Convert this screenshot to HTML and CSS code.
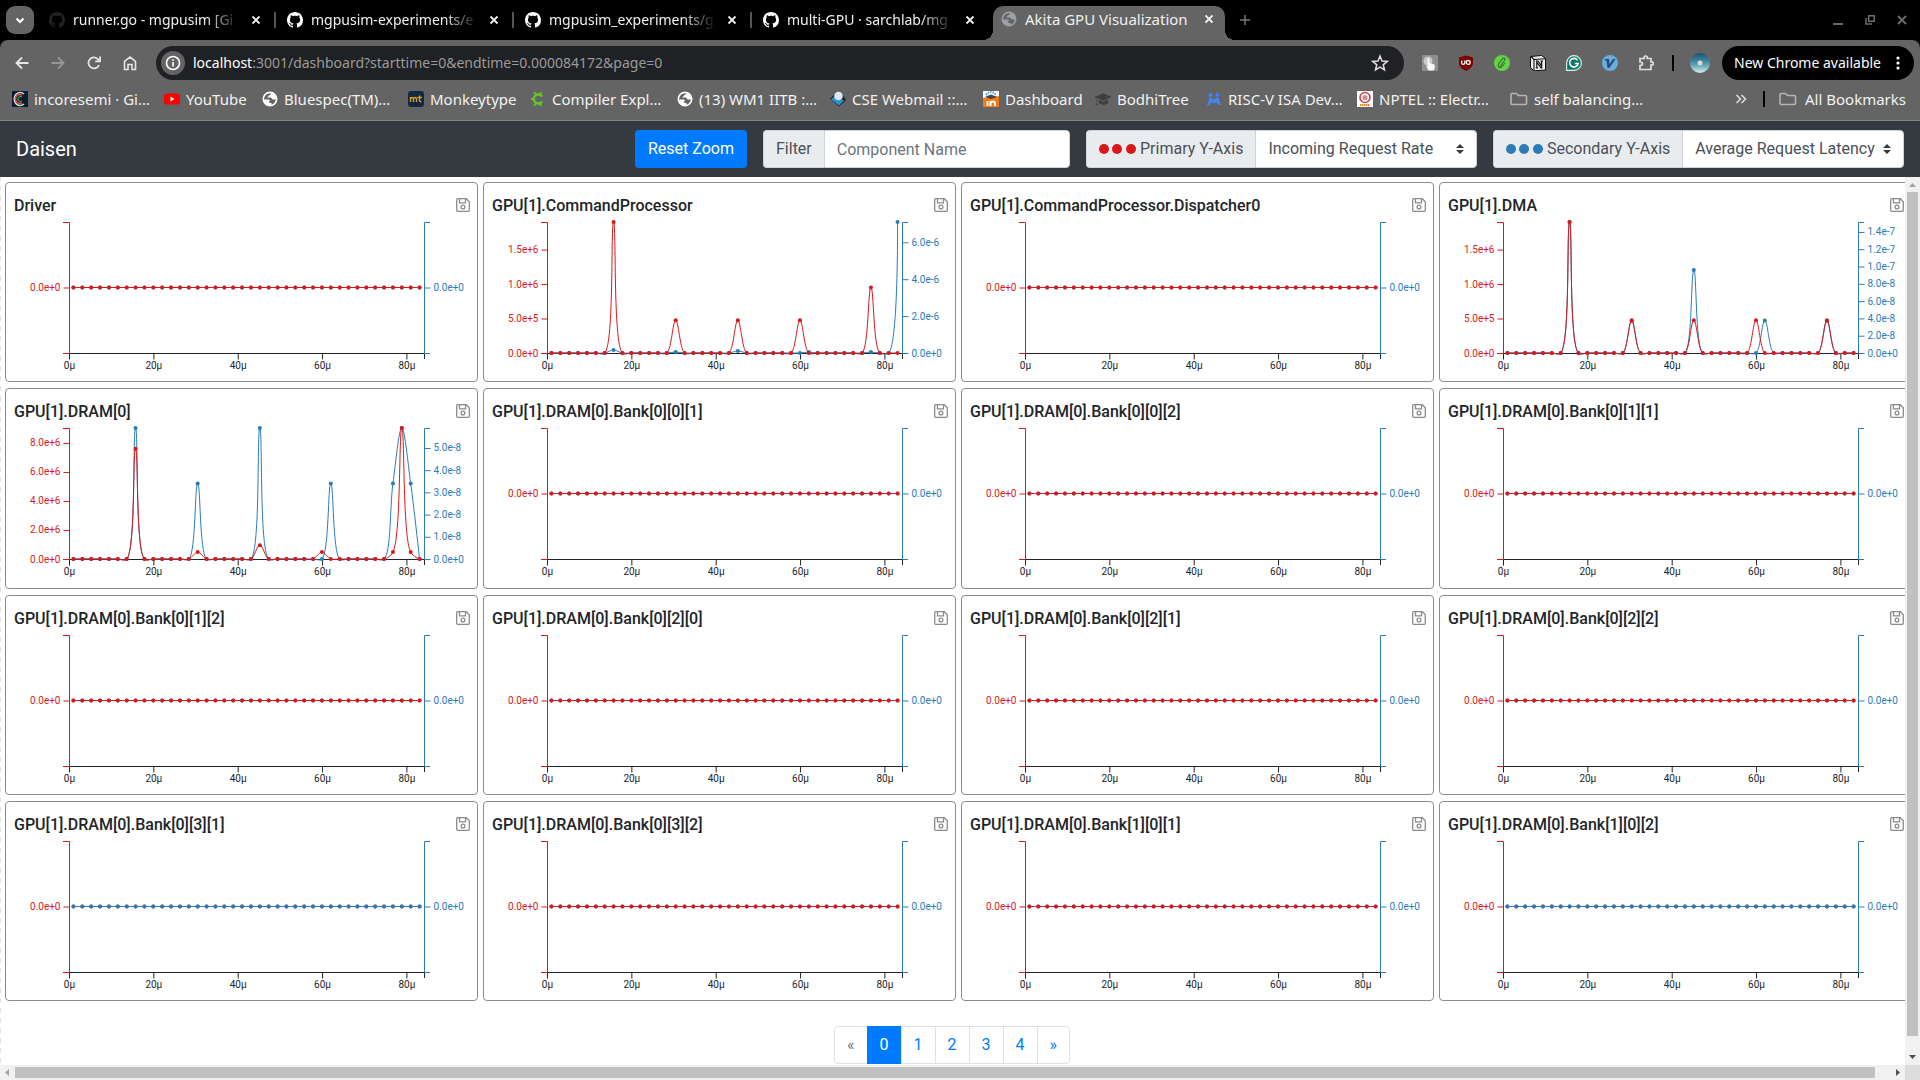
FILE: index.html
```html
<!DOCTYPE html>
<html lang="en">
<head>
<meta charset="utf-8">
<title>Akita GPU Visualization</title>
<link rel="stylesheet" href="styles.css">
</head>
<body>
<svg class="defs" aria-hidden="true">
  <symbol id="github" viewBox="0 0 16 16"><path d="M8 0C3.58 0 0 3.58 0 8c0 3.54 2.29 6.53 5.47 7.59.4.07.55-.17.55-.38 0-.19-.01-.82-.01-1.49-2.01.37-2.53-.49-2.69-.94-.09-.23-.48-.94-.82-1.13-.28-.15-.68-.52-.01-.53.63-.01 1.08.58 1.23.82.72 1.21 1.87.87 2.33.66.07-.52.28-.87.51-1.07-1.78-.2-3.64-.89-3.64-3.95 0-.87.31-1.59.82-2.15-.08-.2-.36-1.02.08-2.12 0 0 .67-.21 2.2.82.64-.18 1.32-.27 2-.27s1.36.09 2 .27c1.53-1.04 2.2-.82 2.2-.82.44 1.1.16 1.92.08 2.12.51.56.82 1.27.82 2.15 0 3.07-1.87 3.75-3.65 3.95.29.25.54.73.54 1.48 0 1.07-.01 1.93-.01 2.2 0 .21.15.46.55.38A8.01 8.01 0 0 0 16 8c0-4.42-3.58-8-8-8z"/></symbol>
  <symbol id="globe" viewBox="0 0 16 16"><path fill-rule="evenodd" d="M8 .5a7.500 7.500 0 1 0 0 15a7.500 7.500 0 0 0 0-15zM9 2.200C9 3.500 8 4 7 4.200C6.800 5.500 5.500 5.500 5 6.500H8.500C10 6.500 9.500 8.500 11 8.500H13.800C13.500 11 12 13 9.500 13.800V12H8C7 12 7 11 7 10.500C8.500 10 8 8.500 6.500 8.500H2.200C2 5 4.500 2 9 2.200z"/></symbol>
  <symbol id="close" viewBox="0 0 16 16"><path d="M4.500 4.500l7 7M11.500 4.500l-7 7" fill="none" stroke="currentColor" stroke-width="1.800"/></symbol>
  <symbol id="folder" viewBox="0 0 18 16"><path d="M1 12.500V3.500Q1 2.500 2 2.500H6.500L8.500 4.500H15.500Q16.500 4.500 16.500 5.500V12.500Q16.500 13.500 15.500 13.500H2Q1 13.500 1 12.500z" fill="none" stroke="#b4b4b4" stroke-width="1.600"/></symbol>
  <symbol id="save" viewBox="0 0 14 14"><g fill="none" stroke="#8c8c8c" stroke-width="1.300"><path d="M1.700.700H10.300L13.300 3.700V12.300Q13.300 13.300 12.300 13.300H1.700Q.7 13.300.7 12.300V1.700Q.7.700 1.700.700z"/><path d="M3.500.700V4.800H9.500V.7"/><circle cx="7" cy="9" r="1.900"/></g></symbol>
</svg>

<div class="tabstrip">
  <button class="tab-search" aria-label="Search tabs"><svg width="12" height="12" viewBox="0 0 12 12"><path d="M2.500 4.500L6 8l3.500-3.500" fill="none" stroke="#fff" stroke-width="2"/></svg></button>
  <div class="tabs">
    <div class="tab dim"><svg class="fav"><use href="#github"/></svg><span class="tab-title">runner.go - mgpusim [Gi</span><button class="x" aria-label="Close tab"><svg><use href="#close"/></svg></button></div>
    <div class="tab"><svg class="fav"><use href="#github"/></svg><span class="tab-title">mgpusim-experiments/e</span><button class="x" aria-label="Close tab"><svg><use href="#close"/></svg></button></div>
    <div class="tab"><svg class="fav"><use href="#github"/></svg><span class="tab-title">mgpusim_experiments/g</span><button class="x" aria-label="Close tab"><svg><use href="#close"/></svg></button></div>
    <div class="tab"><svg class="fav"><use href="#github"/></svg><span class="tab-title">multi-GPU · sarchlab/mg</span><button class="x" aria-label="Close tab"><svg><use href="#close"/></svg></button></div>
    <div class="tab active"><svg class="fav"><use href="#globe"/></svg><span class="tab-title">Akita GPU Visualization</span><button class="x" aria-label="Close tab"><svg><use href="#close"/></svg></button></div>
  </div>
  <button class="new-tab" aria-label="New tab"><svg width="12" height="12" viewBox="0 0 12 12"><path d="M6 1v10M1 6h10" stroke="#777" stroke-width="1.500"/></svg></button>
  <div class="window-buttons">
    <button aria-label="Minimize"><svg width="12" height="12" viewBox="0 0 12 12"><path d="M1 10h10" stroke="#6b6b6b" stroke-width="2"/></svg></button>
    <button aria-label="Restore"><svg width="12" height="12" viewBox="0 0 12 12"><path d="M4.700 1.700h5.600v5.600H4.700zM2 4v6h6" fill="none" stroke="#6b6b6b" stroke-width="1.500"/></svg></button>
    <button aria-label="Close"><svg width="12" height="12" viewBox="0 0 12 12"><path d="M2 2l8 8M10 2l-8 8" stroke="#6b6b6b" stroke-width="2"/></svg></button>
  </div>
</div>

<div class="chrome">
  <div class="toolbar">
    <div class="nav-buttons">
      <button aria-label="Back"><svg width="16" height="16" viewBox="0 0 16 16"><path d="M14.500 8H3M8 2.500L2.500 8L8 13.500" fill="none" stroke="#e6e6e6" stroke-width="1.800"/></svg></button>
      <button aria-label="Forward"><svg width="16" height="16" viewBox="0 0 16 16"><path d="M1.500 8H13M8 2.500L13.500 8L8 13.500" fill="none" stroke="#969696" stroke-width="1.800"/></svg></button>
      <button aria-label="Reload"><svg width="16" height="16" viewBox="0 0 16 16"><path d="M13 10a5.500 5.500 0 1 1-.8-5.500L14 6.300M14 1.500V6.300H9.200" fill="none" stroke="#e6e6e6" stroke-width="1.800"/></svg></button>
      <button aria-label="Home"><svg width="16" height="16" viewBox="0 0 16 16"><path d="M2.500 6.300L8 2l5.500 4.300V14.500H10V9.500H6V14.500H2.500z" fill="none" stroke="#e6e6e6" stroke-width="1.600"/></svg></button>
    </div>
    <div class="omnibox">
      <button class="info" aria-label="Site information"><svg width="16" height="16" viewBox="0 0 16 16"><circle cx="8" cy="8" r="6.500" fill="none" stroke="#fff" stroke-width="1.600"/><path d="M8 7v4.500M8 4.300V6" stroke="#fff" stroke-width="1.600"/></svg></button>
      <span class="url"><b>localhost</b>:3001/dashboard?starttime=0&amp;endtime=0.000084172&amp;page=0</span>
      <button class="star" aria-label="Bookmark this tab"><svg width="18" height="18" viewBox="0 0 18 18"><path d="M9 2l2 5 5.300.400-4.100 3.400 1.300 5.200L9 13.200 4.500 16l1.300-5.200L1.700 7.400 7 7z" fill="none" stroke="#dcdcdc" stroke-width="1.500"/></svg></button>
    </div>
    <div class="extensions">
      <svg viewBox="0 0 16 16"><rect width="16" height="16" rx="1" fill="#8f8f8f"/><circle cx="6" cy="6" r="4.500" fill="#c9c9c9"/><path d="M5.500 3.500q1-1 2 0V8l5 1.500q1 3-1 6H6.500L4 11l1.500.500z" fill="#f4f8fb"/></svg>
      <svg viewBox="0 0 16 16"><path d="M8 .5L15 2.500V8q0 5-7 7.800Q1 13 1 8V2.500z" fill="#800000"/><path d="M3.700 5.500V8q0 1.300 1.500 1.300T6.800 8V5.500M6.800 7.400V8.600" fill="none" stroke="#fff" stroke-width="1.300"/><circle cx="10.200" cy="7.400" r="1.900" fill="none" stroke="#fff" stroke-width="1.300"/></svg>
      <svg viewBox="0 0 16 16"><circle cx="8" cy="8" r="8" fill="#61d345"/><path d="M6 11.500L10.500 5.500Q11.500 4 10.300 3.300T8.200 4L4.500 9Q3.500 11 4.700 12T7.500 12L11 8" fill="none" stroke="#35722d" stroke-width="1.100"/></svg>
      <svg viewBox="0 0 16 16"><path d="M1 1.500L11.500.5 15.500 3.500V15L4 15.800.5 12.500V1.500z" fill="#eee" stroke="#111"/><path d="M1 1.500L4 4.500V15.500M4 4.500L15.500 3.700" fill="none" stroke="#111" stroke-width="1.100"/><path d="M6 6h2L11.500 11V6.500M6.800 6.500V13M11.700 6V13H11L7 7.500M5.800 13H8M10.500 6H13" fill="none" stroke="#111" stroke-width="1.200"/></svg>
      <svg viewBox="0 0 16 16"><path d="M8 .6a7.400 7.400 0 0 1 0 14.800H.6V8A7.400 7.400 0 0 1 8 .6z" fill="#0b7a64" stroke="#dff3ee" stroke-width="1.100"/><path d="M11.500 5.200A4.300 4.300 0 1 0 12.200 8.500H8.700" fill="none" stroke="#fff" stroke-width="1.600"/></svg>
      <svg viewBox="0 0 16 16"><circle cx="8" cy="8" r="8" fill="#67aede"/><path d="M3 4h4l.6 5L11 4h2.700L7.300 13H5.500L4.500 5.500H3z" fill="#274d75"/></svg>
      <svg viewBox="0 0 16 16"><path d="M2 3.500H6.200Q5.800 1 7.700 1T9.200 3.500H13V7Q15.300 6.600 15.300 8.500T13 10V14.500H2V10.700Q4.500 10.500 4.500 8.800T2 7z" fill="none" stroke="#e0e0e0" stroke-width="1.700"/></svg>
    </div>
    <i class="divider"></i>
    <span class="avatar"></span>
    <button class="update">New Chrome available<svg width="4" height="16" viewBox="0 0 4 16"><g fill="#fff"><circle cx="2" cy="3" r="1.600"/><circle cx="2" cy="8" r="1.600"/><circle cx="2" cy="13" r="1.600"/></g></svg></button>
  </div>
  <div class="bookmarks">
    <div class="links">
      <a href="#"><svg viewBox="0 0 16 16"><rect width="16" height="16" fill="#0e1a2e"/><path d="M12 3A6 6.500 0 1 0 12 13" fill="none" stroke="#d9d9d9" stroke-width="1.500"/><path d="M10 4A4.500 4.500 0 1 0 10 12" fill="none" stroke="#e0532f" stroke-width="1.600"/><path d="M10 6A2.500 2.500 0 1 0 10 10" fill="none" stroke="#3b9b5c" stroke-width="1.200"/></svg>incoresemi · Gi…</a>
      <a href="#"><svg viewBox="0 0 16 16"><rect y="2.500" width="16" height="11" rx="2.500" fill="#f00"/><path d="M6.500 5.500v5L10.500 8z" fill="#fff"/></svg>YouTube</a>
      <a href="#"><svg class="white"><use href="#globe"/></svg>Bluespec(TM)…</a>
      <a href="#"><svg viewBox="0 0 16 16"><rect width="16" height="16" rx="3" fill="#142842"/><path d="M2.500 11V6M2.500 8q0-1.500 1.500-1.500T5.500 8v3M5.500 8Q5.500 6.500 7 6.500T8.500 8v3M11.500 4.500v5q0 1.500 2 1.300M9.500 6.500h4.500" fill="none" stroke="#d9a520" stroke-width="1.300"/></svg>Monkeytype</a>
      <a href="#"><svg viewBox="0 0 16 16"><path d="M12 5.500A4.500 4.500 0 1 0 12 10.500" fill="none" stroke="#67c52a" stroke-width="2.400"/><path d="M4 1l2 2.500M11 1l-1 2.500M1 8H3M4 15l2-2.500M11 15l-1-2.500" stroke="#67c52a" stroke-width="1.800"/></svg>Compiler Expl…</a>
      <a href="#"><svg class="white"><use href="#globe"/></svg>(13) WM1 IITB :…</a>
      <a href="#"><svg viewBox="0 0 16 16"><path d="M0 8L5 3H12L16 9L9 15.500z" fill="#1c2730"/><path d="M1 8.500L5 5l9 4.500L9 14.500z" fill="#2d8fd0"/><circle cx="8.500" cy="5" r="4.300" fill="#dfe8ee"/></svg>CSE Webmail ::…</a>
      <a href="#"><svg viewBox="0 0 16 16"><rect width="16" height="16" fill="#f4f7fb"/><path d="M3 4Q8-2 13 4" fill="none" stroke="#6f9ccc" stroke-width="2" stroke-dasharray="1.500 1"/><path d="M0 7L16 5V16H0z" fill="#f17c16"/><path d="M2 6l6-2.500L14 6 8 8z" fill="#444"/><path d="M4.500 10V15M7.500 15V10M7.500 12Q8 10.500 10 10.500T12 12.500V15" stroke="#fff" stroke-width="1.900" fill="none"/></svg>Dashboard</a>
      <a href="#"><svg viewBox="0 0 16 16"><path d="M0 6L8.500 2.500 16 6 8.500 9.500zM4 9l4.500 2L13 9V12Q8.500 15 4 12zM1.500 7v6l-1 1h2l-1-1" fill="#3f3f3f" stroke="#3f3f3f" stroke-width=".5"/></svg>BodhiTree</a>
      <a href="#"><svg viewBox="0 0 16 16"><g fill="#4285f4"><circle cx="4.500" cy="4" r="2"/><circle cx="11.500" cy="4" r="2"/><path d="M3 7h3l2 1.500L10 7h3l.5 4L15.500 14h-3L10.500 11 8 12.500 5.500 11 3.500 14h-3L2.500 11z"/></g></svg>RISC-V ISA Dev…</a>
      <a href="#"><svg viewBox="0 0 16 16"><rect width="16" height="16" fill="#fff"/><circle cx="8" cy="6.500" r="5" fill="none" stroke="#c4484f" stroke-width="1.600"/><circle cx="8" cy="6.500" r="2.600" fill="#d98a8e"/><path d="M3 14h10" stroke="#e0851f" stroke-width="2" stroke-dasharray="1.500 .5"/></svg>NPTEL :: Electr…</a>
      <a href="#"><svg class="folder"><use href="#folder"/></svg>self balancing…</a>
    </div>
    <button class="more" aria-label="More bookmarks"><svg width="12" height="12" viewBox="0 0 12 12"><path d="M1.500 2L5.500 6l-4 4M6.500 2L10.500 6l-4 4" fill="none" stroke="#e0e0e0" stroke-width="1.500"/></svg></button>
    <i class="divider"></i>
    <a class="all" href="#"><svg class="folder"><use href="#folder"/></svg>All Bookmarks</a>
  </div>
</div>

<nav class="navbar">
  <a class="brand" href="#">Daisen</a>
  <button class="reset">Reset Zoom</button>
  <div class="group filter"><label for="filter">Filter</label><input id="filter" type="text" placeholder="Component Name"></div>
  <div class="group primary"><label for="primary"><svg width="41" height="12" viewBox="0 0 41 12" fill="#d7191c"><circle cx="5" cy="6" r="5"/><circle cx="18" cy="6" r="5"/><circle cx="32" cy="6" r="5"/></svg>Primary Y-Axis</label><select id="primary"><option>Incoming Request Rate</option></select></div>
  <div class="group secondary"><label for="secondary"><svg width="41" height="12" viewBox="0 0 41 12" fill="#2c7bb6"><circle cx="5" cy="6" r="5"/><circle cx="18" cy="6" r="5"/><circle cx="32" cy="6" r="5"/></svg>Secondary Y-Axis</label><select id="secondary"><option>Average Request Latency</option></select></div>
</nav>

<div class="viewport">
  <main class="page">
    <div class="grid" id="grid"></div>
    <nav class="pagination" aria-label="Pages">
      <a class="disabled" href="#">«</a><a class="current" href="#">0</a><a href="#">1</a><a href="#">2</a><a href="#">3</a><a href="#">4</a><a href="#">»</a>
    </nav>
  </main>
  <div class="vscroll"><svg width="15" height="15" viewBox="0 0 15 15"><path d="M4 10L7.500 6L11 10z" fill="#a3a3a3"/></svg><i></i><svg width="15" height="15" viewBox="0 0 15 15"><path d="M4 5L7.500 9L11 5z" fill="#505050"/></svg></div>
  <div class="hscroll"><svg width="15" height="15" viewBox="0 0 15 15"><path d="M9 4L5 7.500L9 11z" fill="#a3a3a3"/></svg><i></i><svg width="15" height="15" viewBox="0 0 15 15"><path d="M6 4L10 7.500L6 11z" fill="#505050"/></svg></div>
  <div class="corner"></div>
</div>
<script src="charts.js"></script>
</body>
</html>
```
FILE: styles.css
```css
* { box-sizing: border-box; }
body {
  margin: 0;
  height: 100vh;
  display: flex;
  flex-direction: column;
  overflow: hidden;
  background: #fff;
  color: #212529;
  font: 400 16px/24px Roboto, sans-serif;
}
button, input, select { font: inherit; }
button { border: 0; padding: 0; background: none; color: inherit; }
a { color: inherit; text-decoration: none; }
svg { display: block; flex: none; }
.defs { display: none; }

/* browser tab strip */
.tabstrip {
  position: relative;
  z-index: 1;
  display: flex;
  height: 40px;
  background: #000;
  color: #f0f0f0;
  font: 14px/20px "Noto Sans", sans-serif;
}
.tab-search {
  display: flex;
  align-items: center;
  justify-content: center;
  width: 28px;
  height: 28px;
  margin: 6px 7px 0 6px;
  border-radius: 9px;
  background: #646464;
}
.tabs { display: flex; }
.tab {
  position: relative;
  display: flex;
  align-items: center;
  gap: 8px;
  width: 238px;
  padding: 0 15px 0 8px;
}
.tab .fav { width: 16px; height: 16px; fill: #fff; }
.tab.dim .fav { fill: #222; }
.tab-title {
  flex: 1;
  min-width: 0;
  overflow: hidden;
  white-space: nowrap;
  -webkit-mask-image: linear-gradient(90deg, #000 80%, transparent);
  mask-image: linear-gradient(90deg, #000 80%, transparent);
}
.tab .x, .tab .x svg { width: 16px; height: 16px; }
.tab:not(.active)::after {
  content: "";
  position: absolute;
  right: 3px;
  top: 12px;
  width: 2px;
  height: 16px;
  background: #555;
}
.tab:nth-child(4)::after { display: none; }
.tab.active {
  width: 232px;
  margin-top: 6px;
  padding: 0 8px 8px;
  background: #646464;
  border-radius: 10px 10px 0 0;
}
.tab.active .fav { fill: #9aa0a6; }
.tab.active .tab-title { font-size: 15px; -webkit-mask-image: none; mask-image: none; }
.tab.active::before, .tab.active::after {
  content: "";
  position: absolute;
  bottom: 0;
  left: -10px;
  width: 10px;
  height: 10px;
  background: radial-gradient(circle at 0 0, transparent 10px, #646464 10px);
}
.tab.active::after { left: 100%; background: radial-gradient(circle at 100% 0, transparent 10px, #646464 10px); }
.new-tab { display: flex; align-items: center; margin-left: 14px; }
.window-buttons { display: flex; align-items: center; gap: 20px; margin-left: auto; padding-right: 12px; }

/* toolbar and bookmarks */
.chrome {
  background: #646464;
  border-bottom: 1px solid #82827e;
  border-radius: 8px 8px 0 0;
  box-shadow: 0 -10px 0 #000;
  color: #f2f2f2;
  font: 14px/20px "Noto Sans", sans-serif;
}
.toolbar { display: flex; align-items: center; height: 46px; padding: 0 6px 0 14px; }
.nav-buttons { display: flex; gap: 20px; margin-right: 18px; }
.omnibox {
  flex: 1;
  display: flex;
  align-items: center;
  height: 34px;
  border-radius: 17px;
  background: #202124;
  padding: 0 15px 0 5px;
}
.info { display: flex; align-items: center; justify-content: center; width: 24px; height: 24px; border-radius: 12px; background: #646464; }
.url { flex: 1; margin-left: 8px; color: #9a9a9a; }
.url b { font-weight: 400; color: #fff; }
.extensions { display: flex; gap: 20px; margin: 0 18px; }
.extensions svg, .links svg { width: 16px; height: 16px; }
.divider { width: 2px; height: 16px; background: #000; }
.avatar {
  width: 20px;
  height: 20px;
  margin: 0 12px 0 16px;
  border-radius: 10px;
  background: radial-gradient(circle, #d8dcd8 0 2px, transparent 3px), linear-gradient(#155474, #4b93a6 50%, #d4eee6);
}
.update {
  display: flex;
  align-items: center;
  justify-content: space-between;
  width: 192px;
  height: 34px;
  padding: 0 14px 0 12px;
  border-radius: 17px;
  background: #000;
  color: #fff;
  white-space: nowrap;
}
.bookmarks {
  display: flex;
  align-items: center;
  height: 34px;
  padding: 0 14px 8px 12px;
  font-size: 15px;
  white-space: nowrap;
}
.links {
  flex: 1;
  display: grid;
  grid-template-columns: 152px 98px 146px 122px 147px 153px 153px 112px 111px 151px 153px 1fr;
}
.links a, .all { display: flex; align-items: center; gap: 6px; }
.links .folder, .all .folder { width: 18px; height: 16px; }
.white { fill: #fff; }
.more { margin-right: 16px; }
.all { margin-left: 14px; gap: 8px; }

/* application navbar */
.navbar {
  display: flex;
  align-items: center;
  gap: 16px;
  height: 56px;
  padding: 0 16px;
  background: #343a40;
}
.brand { margin-right: auto; color: #fff; font-size: 20px; line-height: 30px; }
.reset { width: 112px; height: 38px; border-radius: 4px; background: #007bff; color: #fff; }
.group { display: flex; height: 38px; }
.group label {
  display: flex;
  align-items: center;
  padding: 0 12px;
  border: 1px solid #ced4da;
  border-right: 0;
  border-radius: 4px 0 0 4px;
  background: #e9ecef;
  color: #495057;
}
.group input, .group select {
  flex: 1;
  min-width: 0;
  height: 38px;
  padding: 6px 12px;
  border: 1px solid #ced4da;
  border-radius: 0 4px 4px 0;
  background: #fff;
  color: #495057;
}
.group input::placeholder { color: #6c757d; opacity: 1; }
.group select {
  appearance: none;
  padding-right: 20px;
  background: #fff url("data:image/svg+xml,%3csvg xmlns='http://www.w3.org/2000/svg' viewBox='0 0 4 5'%3e%3cpath fill='%23343a40' d='M2 0L0 2h4zm0 5L0 3h4z'/%3e%3c/svg%3e") no-repeat right 12px center / 8px 10px;
}
.filter { width: 307px; }
.primary { width: 391px; }
.secondary { width: 411px; }

/* scrolled page */
.viewport {
  flex: 1;
  min-height: 0;
  display: grid;
  grid-template: minmax(0, 1fr) 15px / minmax(0, 1fr) 15px;
}
.page {
  display: flex;
  flex-direction: column;
  overflow: hidden;
  padding: 5px 0 1px 4px;
  border-left: 1px solid;
  border-image: repeating-linear-gradient(#e2e2e2 0 5px, #fff 5px 10px) 1;
}
.grid {
  flex: 1;
  min-height: 0;
  margin-right: -7px;
  display: grid;
  grid-template: repeat(4, minmax(0, 1fr)) / repeat(4, minmax(0, 1fr));
  gap: 6px 5px;
}
.card {
  display: flex;
  flex-direction: column;
  min-width: 0;
  border: 1px solid #8c8c8c;
  border-radius: 4px;
}
.card header { display: flex; justify-content: space-between; align-items: center; height: 34px; padding: 10px 7px 0 8px; }
.card h2 { margin: 0; padding-top: 2px; font-size: 16px; font-weight: 500; line-height: 24px; }
.card header svg { width: 14px; height: 14px; }
.plot { flex: 1; min-height: 0; }
.plot svg { width: 100%; height: 100%; }
.plot text { font: 10px Roboto, sans-serif; }
.left { stroke: #d7191c; }
.right { stroke: #2c7bb6; }
.bottom { stroke: #212529; }
.axis { fill: none; stroke-width: 1; }
.left-text { fill: #d7191c; text-anchor: end; }
.right-text { fill: #2c7bb6; }
.bottom-text { fill: #212529; text-anchor: middle; }
.dot-left { fill: #d7191c; }
.dot-right { fill: #2c7bb6; }

.pagination { display: flex; justify-content: center; margin-top: 25px; padding-right: 5px; }
.pagination a {
  padding: 8px 12px;
  margin-left: -1px;
  border: 1px solid #dee2e6;
  line-height: 20px;
  color: #007bff;
}
.pagination a:first-child { border-radius: 4px 0 0 4px; }
.pagination a:last-child { border-radius: 0 4px 4px 0; }
.pagination .disabled { color: #6c757d; }
.pagination .current { background: #007bff; border-color: #007bff; color: #fff; }

.vscroll, .hscroll { display: flex; background: #f1f1f1; }
.vscroll { flex-direction: column; }
.vscroll i { flex: 1; margin: 0 2px 14px; background: #c1c1c1; }
.hscroll i { flex: 1; margin: 2px 15px 2px 0; background: #c1c1c1; }
.corner { background: #dcdcdc; }
```
FILE: charts.js
```js
const END = 84.172;
const BINS = 40;
const flat = { max: 0, ticks: [], peaks: {} };
const rate = [["0.0e+0", 0], ["5.0e+5", 5e5], ["1.0e+6", 1e6], ["1.5e+6", 1.5e6]];
const idle = (name, blueOnTop) => ({ name, primary: flat, secondary: flat, blueOnTop });

const charts = [
  idle("Driver"),
  {
    name: "GPU[1].CommandProcessor",
    primary: { max: 1.9e6, ticks: rate, peaks: { 7: 1.9e6, 14: 4.75e5, 21: 4.75e5, 28: 4.75e5, 36: 9.5e5 } },
    secondary: {
      max: 7.1e-6,
      ticks: [["0.0e+0", 0], ["2.0e-6", 2e-6], ["4.0e-6", 4e-6], ["6.0e-6", 6e-6]],
      peaks: { 7: 1.6e-7, 14: 5e-8, 21: 1.1e-7, 29: 5e-8, 36: 5e-8, 39: 7.1e-6 }
    }
  },
  idle("GPU[1].CommandProcessor.Dispatcher0"),
  {
    name: "GPU[1].DMA",
    primary: { max: 1.9e6, ticks: rate, peaks: { 7: 1.9e6, 14: 4.75e5, 21: 4.75e5, 28: 4.75e5, 36: 4.75e5 } },
    secondary: {
      max: 1.515e-7,
      ticks: [["0.0e+0", 0], ["2.0e-8", 2e-8], ["4.0e-8", 4e-8], ["6.0e-8", 6e-8], ["8.0e-8", 8e-8], ["1.0e-7", 1e-7], ["1.2e-7", 1.2e-7], ["1.4e-7", 1.4e-7]],
      peaks: { 7: 1.515e-7, 14: 3.7e-8, 21: 9.6e-8, 29: 3.75e-8, 36: 3.7e-8 }
    }
  },
  {
    name: "GPU[1].DRAM[0]",
    primary: {
      max: 9.03e6,
      ticks: [["0.0e+0", 0], ["2.0e+6", 2e6], ["4.0e+6", 4e6], ["6.0e+6", 6e6], ["8.0e+6", 8e6]],
      peaks: { 7: 7.6e6, 14: 4.75e5, 21: 9.5e5, 28: 4.75e5, 36: 4.75e5, 37: 9.03e6, 38: 4.75e5 }
    },
    secondary: {
      max: 5.9e-8,
      ticks: [["0.0e+0", 0], ["1.0e-8", 1e-8], ["2.0e-8", 2e-8], ["3.0e-8", 3e-8], ["4.0e-8", 4e-8], ["5.0e-8", 5e-8]],
      peaks: { 7: 5.9e-8, 14: 3.4e-8, 21: 5.9e-8, 29: 3.4e-8, 36: 3.4e-8, 37: 5.9e-8, 38: 3.4e-8 }
    }
  },
  idle("GPU[1].DRAM[0].Bank[0][0][1]"),
  idle("GPU[1].DRAM[0].Bank[0][0][2]"),
  idle("GPU[1].DRAM[0].Bank[0][1][1]"),
  idle("GPU[1].DRAM[0].Bank[0][1][2]"),
  idle("GPU[1].DRAM[0].Bank[0][2][0]"),
  idle("GPU[1].DRAM[0].Bank[0][2][1]"),
  idle("GPU[1].DRAM[0].Bank[0][2][2]"),
  idle("GPU[1].DRAM[0].Bank[0][3][1]", true),
  idle("GPU[1].DRAM[0].Bank[0][3][2]"),
  idle("GPU[1].DRAM[0].Bank[1][0][1]"),
  idle("GPU[1].DRAM[0].Bank[1][0][2]", true)
];

// Centripetal Catmull-Rom spline through the points.
function curve(p) {
  let d = `M${p[0]}`;
  for (let i = 0; i < p.length - 1; i++) {
    const a = p[Math.max(i - 1, 0)], b = p[i], c = p[i + 1], e = p[Math.min(i + 2, p.length - 1)];
    const dist = (m, n) => Math.hypot(m[0] - n[0], m[1] - n[1]);
    const l1 = dist(a, b), l2 = dist(b, c), l3 = dist(c, e);
    const s1 = Math.sqrt(l1), s2 = Math.sqrt(l2), s3 = Math.sqrt(l3);
    const c1 = [0, 1].map(k => {
      if (!l1) return b[k];
      const w = 2 * l1 + 3 * s1 * s2 + l2;
      return (b[k] * w - a[k] * l2 + c[k] * l1) / (3 * s1 * (s1 + s2));
    });
    const c2 = [0, 1].map(k => {
      if (!l3) return c[k];
      const w = 2 * l3 + 3 * s3 * s2 + l2;
      return (c[k] * w + b[k] * l3 - e[k] * l2) / (3 * s3 * (s3 + s2));
    });
    d += `C${c1},${c2},${c}`;
  }
  return d;
}

function draw(chart, width, height) {
  const x0 = 63, x1 = width - 53, y0 = 5, y1 = height - 28;
  const scaleY = (axis, v) => axis.max ? y1 - (v / axis.max) * (y1 - y0) : (y0 + y1) / 2;
  const series = (axis, side) => {
    const pts = Array.from({ length: BINS }, (_, i) => [x0 + (i + .5) * (x1 - x0) / BINS, scaleY(axis, axis.peaks[i] || 0)]);
    return `<path class="axis ${side}" d="${curve(pts)}"/>` +
      pts.map(p => `<circle class="dot-${side}" cx="${p[0]}" cy="${p[1]}" r="2"/>`).join("");
  };
  const ticks = (axis, side, x, dir) => {
    const list = axis.ticks.length ? axis.ticks : [["0.0e+0", 0]];
    return list.map(([label, v]) => {
      const y = scaleY(axis, v) + .5;
      return `<path class="axis ${side}" d="M${x} ${y}h${6 * dir}"/><text class="${side}-text" x="${x + 9 * dir}" y="${y + 3}">${label}</text>`;
    }).join("");
  };
  let out = `<path class="axis bottom" d="M${x0 + .5} ${y1 + 6}V${y1 + .5}H${x1 + .5}V${y1 + 6}"/>`;
  for (let t = 0; t <= 80; t += 20) {
    const x = x0 + .5 + t / END * (x1 - x0);
    out += `<path class="axis bottom" d="M${x} ${y1 + .5}v6"/><text class="bottom-text" x="${x}" y="${y1 + 16}">${t}µ</text>`;
  }
  out += `<path class="axis left" d="M${x0 - 6} ${y0 + .5}H${x0 + .5}V${y1 + .5}H${x0 - 6}"/>` + ticks(chart.primary, "left", x0 + .5, -1);
  out += `<path class="axis right" d="M${x1 + 6} ${y0 + .5}H${x1 + .5}V${y1 + .5}H${x1 + 6}"/>` + ticks(chart.secondary, "right", x1 + .5, 1);
  const red = series(chart.primary, "left"), blue = series(chart.secondary, "right");
  return out + (chart.blueOnTop ? red + blue : blue + red);
}

const grid = document.getElementById("grid");
grid.innerHTML = charts.map(c => `<article class="card"><header><h2>${c.name}</h2><button aria-label="Save ${c.name}"><svg><use href="#save"/></svg></button></header><div class="plot"></div></article>`).join("");

function render() {
  grid.querySelectorAll(".plot").forEach((plot, i) => {
    plot.innerHTML = "";
    const w = plot.clientWidth, h = Math.round(plot.clientHeight);
    plot.innerHTML = `<svg role="img" aria-label="${charts[i].name}">${draw(charts[i], w, h)}</svg>`;
  });
}
render();
addEventListener("resize", render);
```
